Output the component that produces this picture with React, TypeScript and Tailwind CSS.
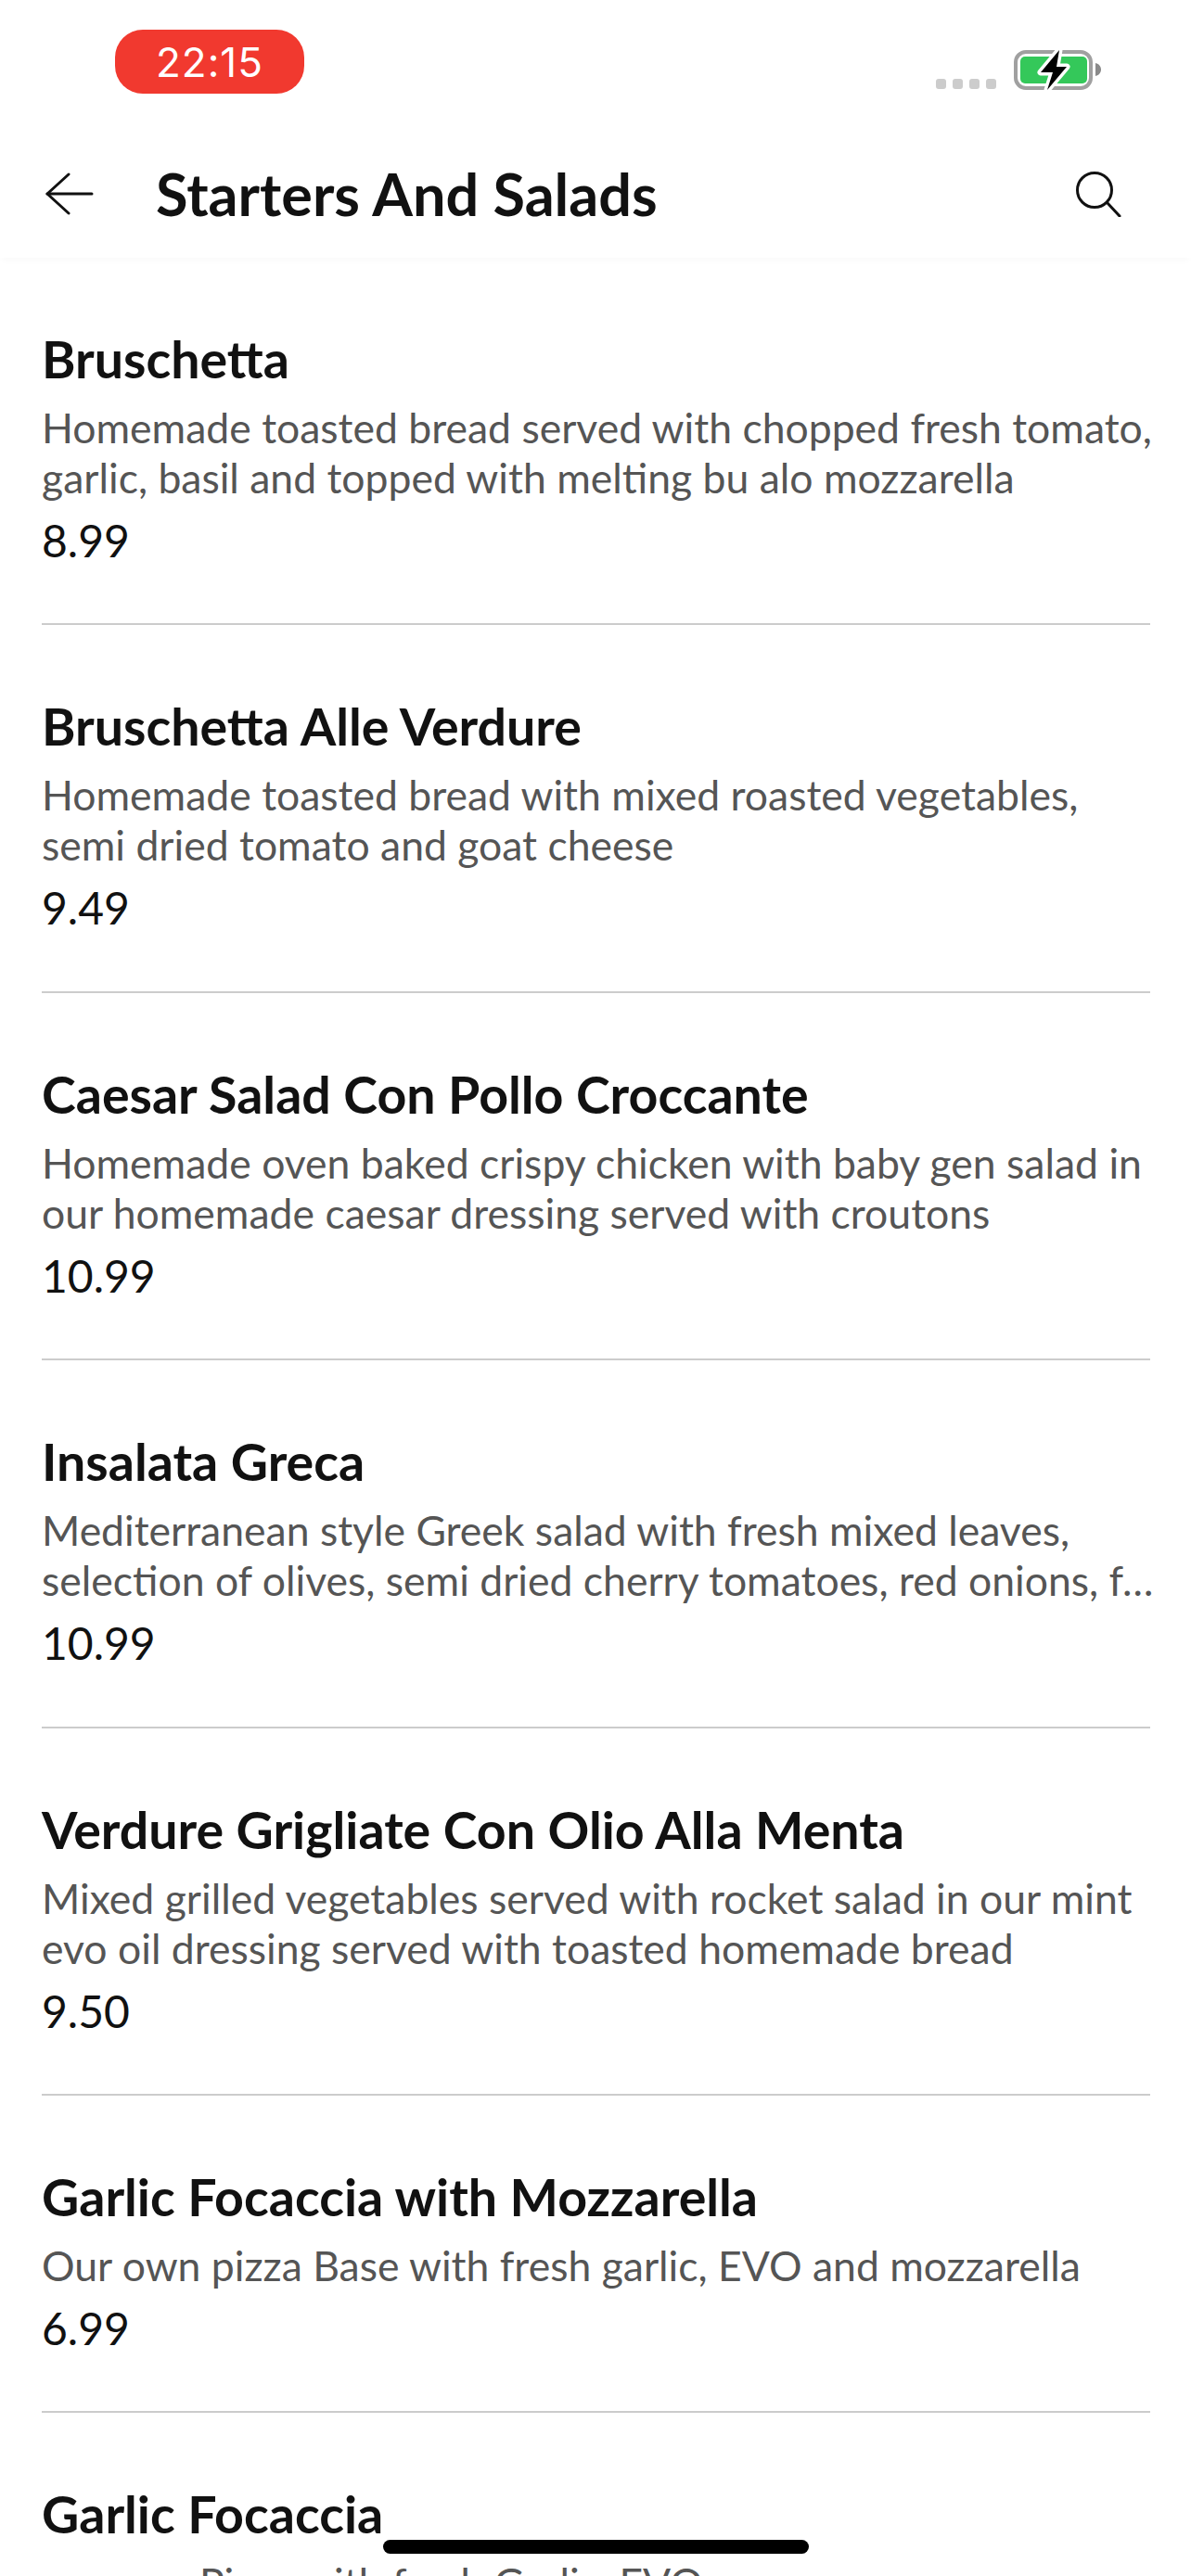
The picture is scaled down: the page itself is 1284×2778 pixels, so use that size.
import React from 'react';

const items = [
  {
    title: 'Bruschetta',
    desc: 'Homemade toasted bread served with chopped fresh tomato, garlic, basil and topped with melting bu alo mozzarella',
    price: '8.99',
  },
  {
    title: 'Bruschetta Alle Verdure',
    desc: 'Homemade toasted bread with mixed roasted vegetables, semi dried tomato and goat cheese',
    price: '9.49',
  },
  {
    title: 'Caesar Salad Con Pollo Croccante',
    desc: 'Homemade oven baked crispy chicken with baby gen salad in our homemade caesar dressing served with croutons',
    price: '10.99',
  },
  {
    title: 'Insalata Greca',
    desc: 'Mediterranean style Greek salad with fresh mixed leaves, selection of olives, semi dried cherry tomatoes, red onions, f…',
    price: '10.99',
  },
  {
    title: 'Verdure Grigliate Con Olio Alla Menta',
    desc: 'Mixed grilled vegetables served with rocket salad in our mint evo oil dressing served with toasted homemade bread',
    price: '9.50',
  },
  {
    title: 'Garlic Focaccia with Mozzarella',
    desc: 'Our own pizza Base with fresh garlic, EVO and mozzarella',
    price: '6.99',
  },
];

const MenuItem = ({ title, desc, price }: { title: string; desc: string; price: string }) => (
  <div className="border-b-2 border-[#cccccc] pt-[77px] pb-[61.4px]">
    <h2 className="text-[55.5px] leading-[64px] font-bold text-[#111111]">{title}</h2>
    <p className="mt-[15px] -mr-[8px] text-[44.5px] leading-[54px] text-[#555555]">{desc}</p>
    <p className="mt-[13px] text-[48px] leading-[56px] text-[#111111]">{price}</p>
  </div>
);

const BackArrow = () => (
  <svg width="52" height="46" viewBox="0 0 52 46" fill="none" stroke="#111111" strokeWidth="3" strokeLinecap="round" strokeLinejoin="round">
    <path d="M50 23H2" />
    <path d="M25 2L2 23l23 21" />
  </svg>
);

const SearchIcon = () => (
  <svg width="49" height="49" viewBox="0 0 49 49" fill="none" stroke="#111111" strokeWidth="3" strokeLinecap="round">
    <circle cx="20" cy="20" r="18.5" />
    <path d="M34 34l13 14" />
  </svg>
);

const Battery = () => (
  <svg width="95" height="44" viewBox="0 0 95 44" fill="none" className="overflow-visible">
    <rect x="3" y="2" width="81" height="39" rx="11" stroke="#a0a0a0" strokeWidth="4" />
    <rect x="8" y="7" width="72" height="29" rx="5" fill="#34c85a" />
    <path d="M89 14c4 1 6 4 6 7s-2 6-6 7z" fill="#8a8a8a" />
    <path d="M50 0L30 24h13l-6 19 21-25H47z" fill="#000000" stroke="#ffffff" strokeWidth="7" strokeLinejoin="round" paintOrder="stroke" />
  </svg>
);

export default function App() {
  return (
    <div className="relative h-[2778px] overflow-hidden bg-white font-['Lato',sans-serif]">
      <div className="flex h-[110px] items-start pl-[124px] pr-[97px] pt-[32px]">
        <div className="flex h-[69px] w-[204px] items-center justify-center rounded-[30px] bg-[#f1392f] text-[44px] tracking-[1px] text-white font-['Inter',sans-serif]">
          22:15
        </div>
        <div className="ml-auto flex items-end gap-[18px] pt-[22px]">
          <div className="mb-[2px] flex gap-[7px]">
            <span className="h-[11px] w-[11px] rounded-[3px] bg-[#cccccc]" />
            <span className="h-[11px] w-[11px] rounded-[3px] bg-[#cccccc]" />
            <span className="h-[11px] w-[11px] rounded-[3px] bg-[#cccccc]" />
            <span className="h-[11px] w-[11px] rounded-[3px] bg-[#cccccc]" />
          </div>
          <Battery />
        </div>
      </div>

      <div className="flex h-[168px] items-center pl-[49px] pr-[75px] pt-[30px] shadow-[0_6px_6px_-2px_rgba(0,0,0,0.02)]">
        <BackArrow />
        <h1 className="ml-[67px] text-[63px] font-bold text-[#111111]">Starters And Salads</h1>
        <div className="ml-auto">
          <SearchIcon />
        </div>
      </div>

      <div className="pl-[45px] pr-[44px]">
        {items.map((item) => (
          <MenuItem key={item.title + item.price} {...item} />
        ))}
        <div className="pt-[77px]">
          <h2 className="text-[55.5px] leading-[64px] font-bold text-[#111111]">Garlic Focaccia</h2>
          <p className="mt-[15px] pl-[170px] text-[44.5px] leading-[54px] text-[#555555]">Pizza with fresh Garlic, EVO</p>
        </div>
      </div>

      <div className="absolute bottom-[24px] left-[413px] h-[15px] w-[459px] rounded-full bg-black" />
    </div>
  );
}
